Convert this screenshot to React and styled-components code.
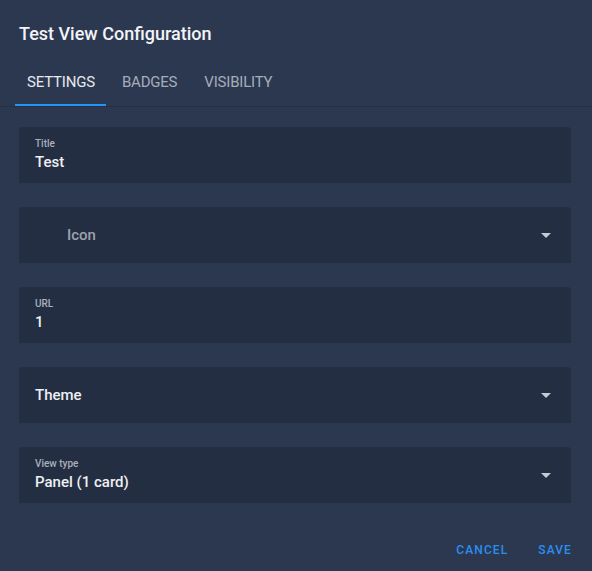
import React from 'react'
import styled, { createGlobalStyle } from 'styled-components'

const GlobalStyle = createGlobalStyle`
  html, body {
    margin: 0;
    padding: 0;
    background: #2c3850;
  }
  body {
    font-family: Roboto, "Liberation Sans", sans-serif;
  }
`

const Dialog = styled.div`
  width: 592px;
  height: 571px;
  background: #2c3850;
  display: flex;
  flex-direction: column;
  box-sizing: border-box;
`

const Heading = styled.h2`
  margin: 0;
  padding: 22px 19px 0;
  height: 26px;
  line-height: 24px;
  font-size: 18px;
  font-weight: 500;
  color: #f2f4f7;
`

const TabBar = styled.div`
  display: flex;
  gap: 4px;
  margin-top: 10px;
  padding-left: 15px;
  box-shadow: 0 1px 0 #263044;
`

const Tab = styled.div`
  height: 48px;
  padding: 1px 11px 0 12px;
  display: flex;
  align-items: center;
  justify-content: center;
  font-size: 15px;
  letter-spacing: -0.2px;
  color: ${p => (p.active ? '#e6e9ee' : '#a5adbb')};
  border-bottom: 2px solid ${p => (p.active ? '#2196f3' : 'transparent')};
  box-sizing: border-box;
`

const Form = styled.div`
  display: flex;
  flex-direction: column;
  gap: 24px;
  padding: 21px 21px 0 19px;
`

const Field = styled.div`
  position: relative;
  height: 56px;
  background: #242e42;
  border-radius: 4px 4px 0 0;
  display: flex;
  flex-direction: column;
  justify-content: center;
  padding: 0 40px 0 ${p => (p.indent ? 48 : 16)}px;
  box-sizing: border-box;
`

const Label = styled.div`
  font-size: 10px;
  font-weight: 500;
  color: #a8b0bd;
  line-height: 12px;
`

const Value = styled.div`
  font-size: 15px;
  font-weight: 500;
  color: ${p => (p.placeholder ? '#9aa2af' : '#eef0f3')};
  line-height: 20px;
  margin-top: ${p => (p.hasLabel ? 2 : 0)}px;
`

const Arrow = styled.span`
  position: absolute;
  right: 20px;
  top: 50%;
  margin-top: -2px;
  width: 0;
  height: 0;
  border-left: 5px solid transparent;
  border-right: 5px solid transparent;
  border-top: 5px solid #c4cad4;
`

const Actions = styled.div`
  margin-top: auto;
  display: flex;
  justify-content: flex-end;
  gap: 15px;
  padding: 0 13px 3px;
`

const TextButton = styled.button`
  background: none;
  border: none;
  padding: 0 7px 0 8px;
  height: 36px;
  font-family: Roboto, "Liberation Sans", sans-serif;
  font-size: 12px;
  font-weight: 500;
  letter-spacing: 1.1px;
  color: #2a8ef0;
  cursor: pointer;
`

const fields = [
  { label: 'Title', value: 'Test' },
  { value: 'Icon', placeholder: true, indent: true, select: true },
  { label: 'URL', value: '1' },
  { value: 'Theme', select: true },
  { label: 'View type', value: 'Panel (1 card)', select: true }
]

export default function App () {
  return (
    <>
      <GlobalStyle />
      <Dialog>
        <Heading>Test View Configuration</Heading>
        <TabBar>
          <Tab active>SETTINGS</Tab>
          <Tab>BADGES</Tab>
          <Tab>VISIBILITY</Tab>
        </TabBar>
        <Form>
          {fields.map((f, i) => (
            <Field key={i} indent={f.indent}>
              {f.label && <Label>{f.label}</Label>}
              <Value hasLabel={!!f.label} placeholder={f.placeholder}>{f.value}</Value>
              {f.select && <Arrow />}
            </Field>
          ))}
        </Form>
        <Actions>
          <TextButton>CANCEL</TextButton>
          <TextButton>SAVE</TextButton>
        </Actions>
      </Dialog>
    </>
  )
}
